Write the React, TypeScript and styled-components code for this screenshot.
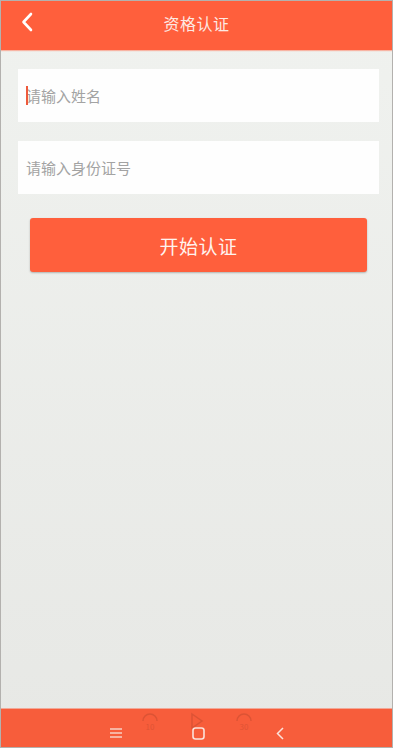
import React from "react";
import styled, { createGlobalStyle } from "styled-components";

const GlobalStyle = createGlobalStyle`
  html, body {
    margin: 0;
    padding: 0;
    height: 100%;
  }
  body {
    font-family: "Noto Sans CJK SC", "Noto Sans", sans-serif;
  }
  #root {
    height: 100%;
  }
`;

const Frame = styled.div`
  box-sizing: border-box;
  width: 393px;
  height: 748px;
  border: 1px solid #b3b1ae;
  display: flex;
  flex-direction: column;
  background: linear-gradient(#f0f2ef, #e7e8e5);
  overflow: hidden;
`;

const Header = styled.header`
  position: relative;
  height: 49px;
  flex-shrink: 0;
  box-sizing: border-box;
  padding-bottom: 5px;
  background: #ff5f3c;
  display: flex;
  align-items: center;
  justify-content: center;
  box-shadow: 0 1px 1px rgba(255, 120, 90, 0.5);
`;

const BackButton = styled.button`
  position: absolute;
  left: 16px;
  top: 10px;
  width: 20px;
  height: 22px;
  padding: 0;
  border: none;
  background: none;
  display: flex;
  align-items: center;
  justify-content: center;
`;

const Title = styled.h1`
  margin: 0;
  font-size: 16px;
  font-weight: 400;
  color: #fde9e3;
  letter-spacing: 0.5px;
`;

const Content = styled.main`
  flex: 1;
  display: flex;
  flex-direction: column;
  padding: 19px 13px 0 17px;
`;

const InputBox = styled.div<{ $gap?: number }>`
  height: 53px;
  background: #fefefe;
  margin-bottom: ${(p) => p.$gap ?? 19}px;
  display: flex;
  align-items: center;
  padding-left: 8px;
  position: relative;
`;

const Input = styled.input`
  border: none;
  outline: none;
  background: transparent;
  width: 100%;
  height: 100%;
  padding: 0;
  font-family: "Noto Sans CJK SC", sans-serif;
  font-size: 15px;
  color: #333;
  caret-color: #f0603f;
  &::placeholder {
    color: #a3a3a3;
  }
`;

const Caret = styled.span`
  position: absolute;
  left: 8px;
  top: 17px;
  width: 2px;
  height: 19px;
  background: #ee5a3c;
`;

const SubmitButton = styled.button`
  margin: 5px 12px 0 12px;
  height: 54px;
  border: none;
  border-radius: 3px;
  background: #ff5f3c;
  box-shadow: 0 1px 2px rgba(0, 0, 0, 0.25);
  color: #fff3ef;
  font-family: "Noto Sans CJK SC", sans-serif;
  font-size: 19px;
  letter-spacing: 0.5px;
`;

const NavBar = styled.nav`
  position: relative;
  height: 39px;
  flex-shrink: 0;
  background: #f75d3b;
  border-top: 1px solid #f2a796;
  display: flex;
  align-items: flex-end;
  justify-content: center;
  padding-bottom: 6px;
  padding-left: 3px;
  box-sizing: border-box;
`;

const NavSlot = styled.div`
  width: 82px;
  height: 16px;
  display: flex;
  align-items: center;
  justify-content: center;
`;

const Ghost = styled.div`
  position: absolute;
  top: 1px;
  left: 0;
  right: 0;
  display: flex;
  justify-content: center;
  opacity: 0.1;
`;

const GhostSlot = styled.div`
  width: 47px;
  height: 22px;
  display: flex;
  align-items: center;
  justify-content: center;
`;

export default function App() {
  return (
    <>
      <GlobalStyle />
      <Frame>
        <Header>
          <BackButton aria-label="back">
            <svg width="12" height="20" viewBox="0 0 12 20">
              <path d="M10 2 L2.5 10 L10 18" fill="none" stroke="#fff" strokeWidth="2.6" strokeLinecap="round" strokeLinejoin="round" />
            </svg>
          </BackButton>
          <Title>资格认证</Title>
        </Header>
        <Content>
          <InputBox>
            <Caret />
            <Input placeholder="请输入姓名" />
          </InputBox>
          <InputBox $gap={19}>
            <Input placeholder="请输入身份证号" />
          </InputBox>
          <SubmitButton>开始认证</SubmitButton>
        </Content>
        <NavBar>
          <Ghost>
            <GhostSlot>
              <svg width="20" height="20" viewBox="0 0 20 20">
                <path d="M3 10 A7 7 0 1 1 17 10" fill="none" stroke="#000" strokeWidth="1.5" />
                <text x="10" y="19" fontSize="8" textAnchor="middle" fill="#000">10</text>
              </svg>
            </GhostSlot>
            <GhostSlot>
              <svg width="14" height="18" viewBox="0 0 14 18">
                <path d="M2 2 L12 9 L2 16 Z" fill="none" stroke="#000" strokeWidth="1.5" />
              </svg>
            </GhostSlot>
            <GhostSlot>
              <svg width="20" height="20" viewBox="0 0 20 20">
                <path d="M3 10 A7 7 0 1 1 17 10" fill="none" stroke="#000" strokeWidth="1.5" />
                <text x="10" y="19" fontSize="8" textAnchor="middle" fill="#000">30</text>
              </svg>
            </GhostSlot>
          </Ghost>
          <NavSlot>
            <svg width="12" height="10" viewBox="0 0 12 10">
              <path d="M0 1 H12 M0 5 H12 M0 9 H12" stroke="#f8cfc4" strokeWidth="1.3" />
            </svg>
          </NavSlot>
          <NavSlot>
            <svg width="13" height="13" viewBox="0 0 13 13">
              <rect x="1" y="1" width="11" height="11" rx="2.5" fill="none" stroke="#fbe2db" strokeWidth="1.6" />
            </svg>
          </NavSlot>
          <NavSlot>
            <svg width="8" height="13" viewBox="0 0 8 13">
              <path d="M7 1 L1.5 6.5 L7 12" fill="none" stroke="#fbe2db" strokeWidth="1.5" />
            </svg>
          </NavSlot>
        </NavBar>
      </Frame>
    </>
  );
}
